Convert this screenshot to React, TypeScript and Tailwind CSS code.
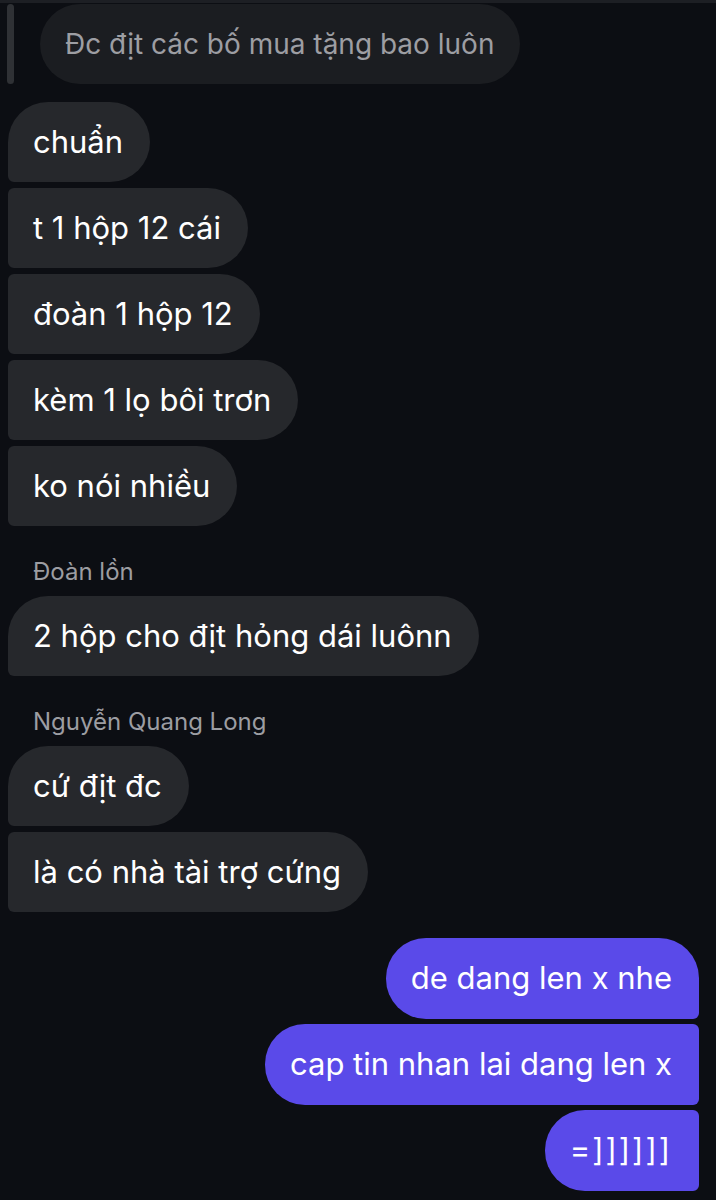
const incoming: { sender?: string; lines: string[] }[] = [
  { lines: ["chuẩn", "t 1 hộp 12 cái", "đoàn 1 hộp 12", "kèm 1 lọ bôi trơn", "ko nói nhiều"] },
  { sender: "Đoàn lồn", lines: ["2 hộp cho địt hỏng dái luônn"] },
  { sender: "Nguyễn Quang Long", lines: ["cứ địt đc", "là có nhà tài trợ cứng"] },
];

const outgoing = ["de dang len x nhe", "cap tin nhan lai dang len x", "=]]]]]]"];

export default function App() {
  return (
    <div className="h-[1200px] w-[716px] overflow-hidden bg-[#0c0e13] font-['Inter','Noto_Sans',sans-serif] antialiased">
      <div className="h-[3px] bg-[#1d1f24]" />

      {/* reply preview */}
      <div className="flex items-stretch gap-[26px] pl-[7px] pt-[1px]">
        <div className="w-[7px] rounded-full bg-[#2f3135]" />
        <div className="flex h-[80px] items-center rounded-[40px] bg-[#1b1d21] pl-[25px] pr-[26px] text-[28px] text-[#9d9ea3]">
          Đc địt các bố mua tặng bao luôn
        </div>
      </div>

      <div className="flex flex-col pl-[8px] pt-[18px]">
        {incoming.map((g, gi) => (
          <div key={gi} className="flex flex-col gap-[6px]">
            {g.sender && (
              <div className="mt-[26px] mb-[-2px] pl-[25px] text-[24px] leading-[40px] text-[#9c9da2]">
                {g.sender}
              </div>
            )}
            {g.lines.map((t, i) => (
              <div
                key={t}
                className={`flex h-[80px] w-fit items-center rounded-r-[40px] bg-[#26282c] pl-[25px] pr-[27px] text-[31px] text-white ${
                  i === 0 ? "rounded-tl-[40px] rounded-bl-[6px]" : "rounded-l-[6px]"
                }`}
              >
                {t}
              </div>
            ))}
          </div>
        ))}
      </div>

      <div className="flex flex-col items-end gap-[5px] pr-[17px] pt-[26px]">
        {outgoing.map((t, i) => (
          <div
            key={t}
            className={`flex h-[81px] items-center rounded-l-[40px] bg-[#5a4ae9] pl-[25px] pr-[27px] text-[31px] text-white ${
              i === 0 ? "rounded-tr-[40px] rounded-br-[6px]" : "rounded-r-[6px]"
            } ${i === 2 ? "tracking-[2px]" : ""}`}
          >
            {t}
          </div>
        ))}
      </div>
    </div>
  );
}
